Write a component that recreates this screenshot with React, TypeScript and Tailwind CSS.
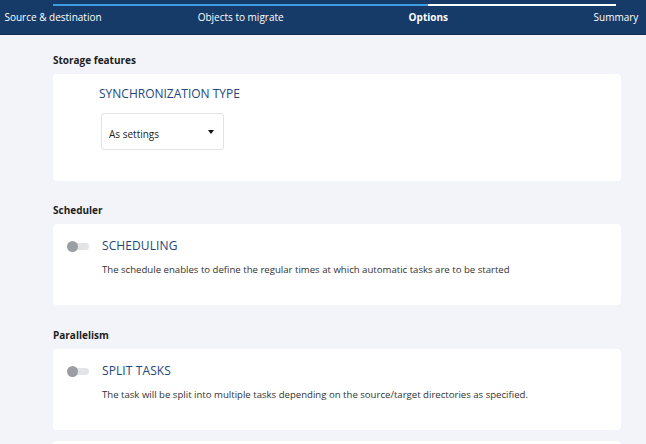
const steps = [
  { label: "Source & destination", active: false },
  { label: "Objects to migrate", active: false },
  { label: "Options", active: true },
  { label: "Summary", active: false },
];

function Toggle() {
  return (
    <div className="relative w-[22px] h-[11px] shrink-0">
      <div className="absolute left-[4px] right-0 top-[2px] h-[7px] rounded-full bg-[#e3e4e6]" />
      <div className="absolute left-0 top-0 w-[11px] h-[11px] rounded-full bg-[#9b9fa4]" />
    </div>
  );
}

function SectionLabel({ children }: { children: React.ReactNode }) {
  return (
    <div className="h-[14px] leading-[14px] text-[10px] font-bold text-[#1d1d1d] mb-[7px]">
      {children}
    </div>
  );
}

function ToggleCard({ title, text }: { title: string; text: string }) {
  return (
    <div className="bg-white rounded-[4px] h-[81px] pl-[14px] pt-[16px]">
      <div className="flex items-center h-[12px]">
        <Toggle />
        <span className="ml-[13px] text-[12px] leading-[12px] text-[#24467a] tracking-[0.1px]">
          {title}
        </span>
      </div>
      <p className="ml-[35px] mt-[12px] text-[9.6px] leading-[12px] text-[#333]">{text}</p>
    </div>
  );
}

export default function App() {
  return (
    <div
      className="w-[646px] h-[444px] overflow-hidden bg-[#f3f4f9]"
      style={{ fontFamily: '"Open Sans", "Noto Sans", sans-serif' }}
    >
      {/* stepper header */}
      <div className="h-[35px] bg-[#163b68] border-b border-[#0f2d52]">
        <div className="ml-[53px] w-[563px] pt-[4px]">
          <div className="flex h-[2px]">
            <div className="w-[375px] bg-[#3d9be0]" />
            <div className="flex-1 bg-white" />
          </div>
          <div className="flex justify-between mt-[5px]">
            {steps.map((s) => (
              <div key={s.label} className="w-0 flex justify-center">
                <span
                  className={
                    "whitespace-nowrap text-[10px] leading-[12px] text-white " +
                    (s.active ? "font-bold" : "")
                  }
                >
                  {s.label}
                </span>
              </div>
            ))}
          </div>
        </div>
      </div>

      <div className="pl-[53px] pr-[25px] pt-[18px]">
        <SectionLabel>Storage features</SectionLabel>
        <div className="bg-white rounded-[4px] h-[107px] pl-[46px] pt-[14px]">
          <div className="text-[12px] leading-[12px] text-[#24467a]">SYNCHRONIZATION TYPE</div>
          <div className="ml-[2px] mt-[13px] w-[123px] h-[37px] border border-[#e2e3e6] rounded-[3px] flex items-center justify-between pl-[7px] pr-[9px]">
            <span className="text-[10px] leading-[14px] text-[#222] mt-[5px]">As settings</span>
            <span className="w-0 h-0 border-l-[3px] border-r-[3px] border-t-[4px] border-l-transparent border-r-transparent border-t-[#111]" />
          </div>
        </div>

        <div className="mt-[22px]">
          <SectionLabel>Scheduler</SectionLabel>
          <ToggleCard
            title="SCHEDULING"
            text="The schedule enables to define the regular times at which automatic tasks are to be started"
          />
        </div>

        <div className="mt-[23px]">
          <SectionLabel>Parallelism</SectionLabel>
          <ToggleCard
            title="SPLIT TASKS"
            text="The task will be split into multiple tasks depending on the source/target directories as specified."
          />
        </div>

        <div className="mt-[11px] bg-white rounded-[4px] h-[40px]" />
      </div>
    </div>
  );
}
